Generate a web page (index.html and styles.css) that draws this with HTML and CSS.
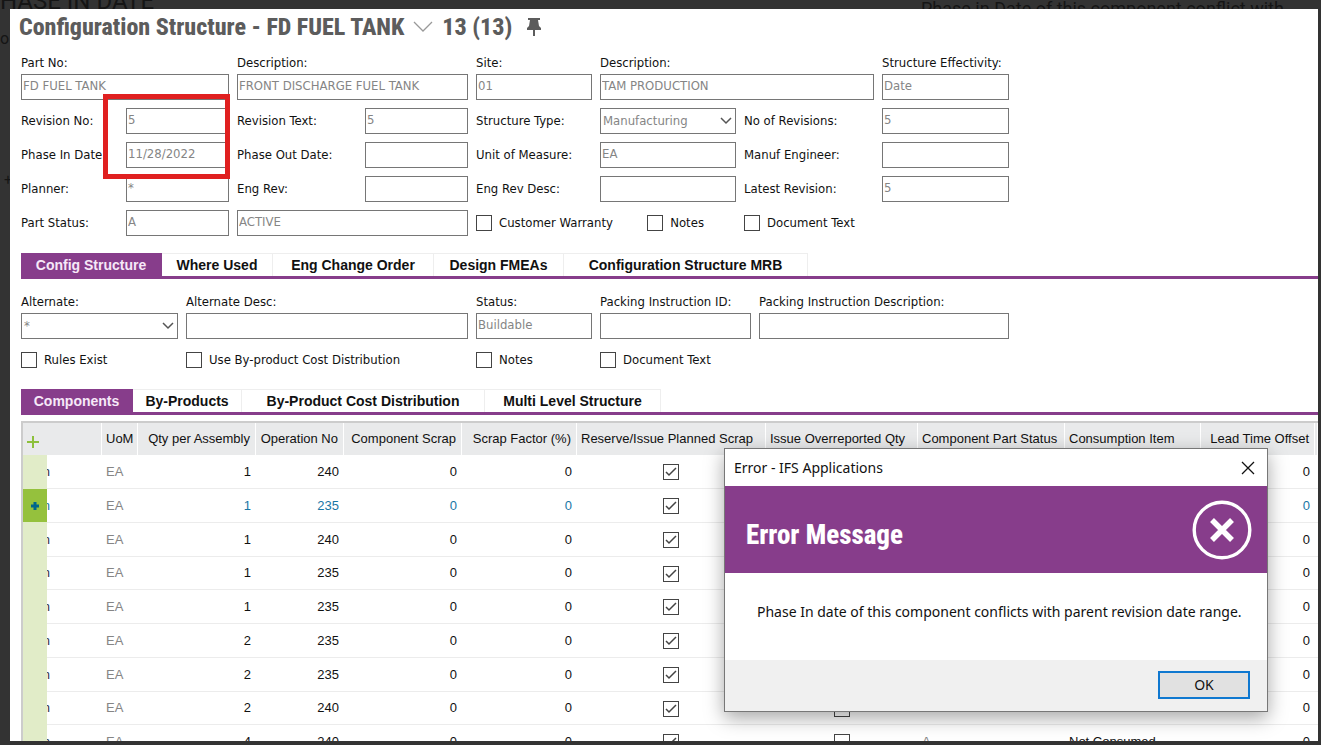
FILE: index.html
```html
<!DOCTYPE html>
<html lang="en">
<head>
<meta charset="utf-8">
<title>Configuration Structure</title>
<link rel="stylesheet" href="styles.css">
</head>
<body>
<div class="backdrop" aria-hidden="true">
  <p class="back-title">HASE IN DATE</p>
  <p class="back-note">Phase in Date of this component conflict with</p>
  <p class="back-letter">o</p>
  <p class="back-plus">+</p>
</div>
<main class="window">
  <header class="title">
    <h1>Configuration Structure - FD FUEL TANK</h1>
    <svg class="title-chevron" viewBox="0 0 20 12" width="20" height="12"><path d="M1 1l9 9 9-9" fill="none" stroke="#999" stroke-width="1.3"/></svg>
    <h1>13 (13)</h1>
    <svg class="pin" viewBox="0 0 14 18" width="14" height="18"><path d="M1 0h12v2h-2l1 6 2 2v2H8v6H6v-6H0v-2l2-2 1-6H1z" fill="#5c5c5c"/></svg>
  </header>

  <form class="form form-main">
    <div class="field span2"><label for="part">Part No:</label><input id="part" value="FD FUEL TANK"></div>
    <div class="field span2"><label for="desc">Description:</label><input id="desc" value="FRONT DISCHARGE FUEL TANK"></div>
    <div class="field"><label for="site">Site:</label><input id="site" value="01"></div>
    <div class="field span2"><label for="sdesc">Description:</label><input id="sdesc" value="TAM PRODUCTION"></div>
    <div class="field"><label for="eff">Structure Effectivity:</label><input id="eff" value="Date"></div>

    <label for="rev">Revision No:</label><input id="rev" value="5">
    <label for="revtext">Revision Text:</label><input id="revtext" value="5">
    <label for="stype">Structure Type:</label>
    <div class="select"><select id="stype"><option>Manufacturing</option></select><svg viewBox="0 0 12 8" width="12" height="8"><path d="M1 1l5 5 5-5" fill="none" stroke="#555" stroke-width="1.5"/></svg></div>
    <label for="norev">No of Revisions:</label><input id="norev" value="5">

    <label for="pin">Phase In Date:</label><input id="pin" value="11/28/2022">
    <label for="pout">Phase Out Date:</label><input id="pout">
    <label for="uom">Unit of Measure:</label><input id="uom" value="EA">
    <label for="meng">Manuf Engineer:</label><input id="meng">

    <label for="planner">Planner:</label><input id="planner" value="*">
    <label for="erev">Eng Rev:</label><input id="erev">
    <label for="erevd">Eng Rev Desc:</label><input id="erevd">
    <label for="lrev">Latest Revision:</label><input id="lrev" value="5">

    <label for="pstat">Part Status:</label><input id="pstat" value="A">
    <input class="span2" aria-label="Part status text" value="ACTIVE">
    <div class="check-pair span2">
      <label class="check"><input type="checkbox">Customer Warranty</label>
      <label class="check"><input type="checkbox">Notes</label>
    </div>
    <label class="check span2"><input type="checkbox">Document Text</label>
    <div class="highlight"></div>
  </form>

  <nav class="tabs tabs-main">
    <button class="active">Config Structure</button><button>Where Used</button><button>Eng Change Order</button><button>Design FMEAs</button><button>Configuration Structure MRB</button>
  </nav>

  <form class="form form-alt">
    <div class="field"><label for="alt">Alternate:</label>
      <div class="select"><select id="alt"><option>*</option></select><svg viewBox="0 0 12 8" width="12" height="8"><path d="M1 1l5 5 5-5" fill="none" stroke="#555" stroke-width="1.5"/></svg></div></div>
    <div class="field"><label for="altd">Alternate Desc:</label><input id="altd"></div>
    <div class="field"><label for="status">Status:</label><input id="status" value="Buildable"></div>
    <div class="field"><label for="pid">Packing Instruction ID:</label><input id="pid"></div>
    <div class="field"><label for="pdesc">Packing Instruction Description:</label><input id="pdesc"></div>
    <label class="check"><input type="checkbox">Rules Exist</label>
    <label class="check"><input type="checkbox">Use By-product Cost Distribution</label>
    <label class="check"><input type="checkbox">Notes</label>
    <label class="check"><input type="checkbox">Document Text</label>
  </form>

  <nav class="tabs tabs-sub">
    <button class="active">Components</button><button>By-Products</button><button>By-Product Cost Distribution</button><button>Multi Level Structure</button>
  </nav>

  <table class="grid">
    <colgroup><col class="c-sel"><col class="c-cut"><col class="c-uom"><col class="c-qty"><col class="c-op"><col class="c-scrap"><col class="c-factor"><col class="c-reserve"><col class="c-issue"><col class="c-status"><col class="c-item"><col class="c-lead"><col></colgroup>
    <thead><tr>
      <th colspan="2" class="add"><svg viewBox="0 0 12 12" width="12" height="12"><path d="M6 0v12M0 6h12" stroke="#8dc03c" stroke-width="2"/></svg></th>
      <th>UoM</th><th class="num">Qty per Assembly</th><th class="num">Operation No</th><th class="num">Component Scrap</th><th class="num">Scrap Factor (%)</th><th>Reserve/Issue Planned Scrap</th><th>Issue Overreported Qty</th><th>Component Part Status</th><th>Consumption Item</th><th class="num">Lead Time Offset</th><th></th>
    </tr></thead>
    <tbody>
      <tr><td class="sel"></td><td class="cut"><span>n</span></td><td class="dim">EA</td><td class="num">1</td><td class="num">240</td><td class="num">0</td><td class="num">0</td><td class="mid"><input type="checkbox" aria-label="Planned scrap" checked></td><td class="mid"><input type="checkbox" aria-label="Overreported"></td><td class="dim">A</td><td>Not Consumed</td><td class="num">0</td><td></td></tr>
      <tr class="current"><td class="sel"><svg viewBox="0 0 8 8" width="8" height="8"><path d="M4 0v8M0 4h8" stroke="#00668c" stroke-width="3"/></svg></td><td class="cut"><span>n</span></td><td class="dim">EA</td><td class="num">1</td><td class="num">235</td><td class="num">0</td><td class="num">0</td><td class="mid"><input type="checkbox" aria-label="Planned scrap" checked></td><td class="mid"><input type="checkbox" aria-label="Overreported"></td><td class="dim">A</td><td>Not Consumed</td><td class="num">0</td><td></td></tr>
      <tr><td class="sel"></td><td class="cut"><span>n</span></td><td class="dim">EA</td><td class="num">1</td><td class="num">240</td><td class="num">0</td><td class="num">0</td><td class="mid"><input type="checkbox" aria-label="Planned scrap" checked></td><td class="mid"><input type="checkbox" aria-label="Overreported"></td><td class="dim">A</td><td>Not Consumed</td><td class="num">0</td><td></td></tr>
      <tr><td class="sel"></td><td class="cut"><span>n</span></td><td class="dim">EA</td><td class="num">1</td><td class="num">235</td><td class="num">0</td><td class="num">0</td><td class="mid"><input type="checkbox" aria-label="Planned scrap" checked></td><td class="mid"><input type="checkbox" aria-label="Overreported"></td><td class="dim">A</td><td>Not Consumed</td><td class="num">0</td><td></td></tr>
      <tr><td class="sel"></td><td class="cut"><span>n</span></td><td class="dim">EA</td><td class="num">1</td><td class="num">235</td><td class="num">0</td><td class="num">0</td><td class="mid"><input type="checkbox" aria-label="Planned scrap" checked></td><td class="mid"><input type="checkbox" aria-label="Overreported"></td><td class="dim">A</td><td>Not Consumed</td><td class="num">0</td><td></td></tr>
      <tr><td class="sel"></td><td class="cut"><span>n</span></td><td class="dim">EA</td><td class="num">2</td><td class="num">235</td><td class="num">0</td><td class="num">0</td><td class="mid"><input type="checkbox" aria-label="Planned scrap" checked></td><td class="mid"><input type="checkbox" aria-label="Overreported"></td><td class="dim">A</td><td>Not Consumed</td><td class="num">0</td><td></td></tr>
      <tr><td class="sel"></td><td class="cut"><span>n</span></td><td class="dim">EA</td><td class="num">2</td><td class="num">235</td><td class="num">0</td><td class="num">0</td><td class="mid"><input type="checkbox" aria-label="Planned scrap" checked></td><td class="mid"><input type="checkbox" aria-label="Overreported"></td><td class="dim">A</td><td>Not Consumed</td><td class="num">0</td><td></td></tr>
      <tr><td class="sel"></td><td class="cut"><span>n</span></td><td class="dim">EA</td><td class="num">2</td><td class="num">240</td><td class="num">0</td><td class="num">0</td><td class="mid"><input type="checkbox" aria-label="Planned scrap" checked></td><td class="mid"><input type="checkbox" aria-label="Overreported"></td><td class="dim">A</td><td>Not Consumed</td><td class="num">0</td><td></td></tr>
      <tr><td class="sel"></td><td class="cut"><span>n</span></td><td class="dim">EA</td><td class="num">4</td><td class="num">240</td><td class="num">0</td><td class="num">0</td><td class="mid"><input type="checkbox" aria-label="Planned scrap" checked></td><td class="mid"><input type="checkbox" aria-label="Overreported"></td><td class="dim">A</td><td>Not Consumed</td><td class="num">0</td><td></td></tr>
    </tbody>
  </table>
</main>

<section class="dialog" role="dialog" aria-labelledby="dialog-title">
  <div class="dialog-bar"><span id="dialog-title">Error - IFS Applications</span>
    <button class="close" aria-label="Close"><svg viewBox="0 0 14 14" width="14" height="14"><path d="M1 1l12 12M13 1L1 13" stroke="#111" stroke-width="1.3"/></svg></button></div>
  <div class="dialog-banner"><h2>Error Message</h2>
    <svg viewBox="0 0 60 60" width="60" height="60"><circle cx="30" cy="30" r="27.8" fill="none" stroke="#fff" stroke-width="3.4"/><path d="M20 20l20 20M40 20L20 40" stroke="#fff" stroke-width="5.5"/></svg></div>
  <p class="dialog-text">Phase In date of this component conflicts with parent revision date range.</p>
  <div class="dialog-foot"><button class="ok">OK</button></div>
</section>
</body>
</html>
```
FILE: styles.css
```css
* { box-sizing: border-box; }

body {
  margin: 0;
  height: 100vh;
  padding: 9px 3px 4px 10px;
  overflow: hidden;
  background: #333;
  position: relative;
  font: 13px/20px "DejaVu Sans Condensed", "Noto Sans", sans-serif;
  color: #111;
}

h1, h2, p { margin: 0; }
button, input, select { font: inherit; color: inherit; }

/* Dimmed page behind the window */
.backdrop { position: absolute; inset: 0; color: #151515; font-family: Roboto, sans-serif; white-space: nowrap; }
.backdrop p { position: absolute; }
.back-title { left: 0; top: -13px; font-size: 24px; line-height: 28px; }
.back-note { left: 921px; top: -1px; font-size: 18px; }
.back-letter { left: 0; top: 29px; font-size: 16px; }
.back-plus { left: 4px; top: 170px; font-size: 14px; }

.window {
  position: relative;
  height: 100%;
  overflow: hidden;
  background: #fff;
  padding-left: 11px;
}

.title { display: flex; align-items: center; height: 36px; margin-left: -2px; gap: 9px; }
.title h1 { font: 800 24px/36px "Roboto Condensed", "Liberation Sans Narrow", sans-serif; color: #5c5c5c; white-space: nowrap; }
.title .pin { margin-left: 6px; }

/* Forms */
.form { display: grid; column-gap: 8px; row-gap: 8px; align-items: center; position: relative; }
.form-main { grid-template-columns: 97px 103px 120px 103px 116px 136px 130px 127px; margin-top: 8px; }
.form-alt { grid-template-columns: 157px 282px 116px 151px 250px; row-gap: 11px; margin-top: 13px; }
.form label { white-space: nowrap; }
.span2 { grid-column: span 2; }
.field { display: flex; flex-direction: column; min-width: 0; }
.field label { height: 21px; }
.form input:not([type="checkbox"]), .form select {
  width: 100%;
  height: 26px;
  border: 1px solid #767676;
  border-radius: 0;
  background: #fff;
  color: #858585;
  padding: 0 1px 3px;
  outline: 0;
}
.form select { appearance: none; padding: 0 2px; }
.select { position: relative; height: 26px; }
.select svg { position: absolute; right: 4px; top: 9px; pointer-events: none; }

.form input[type="checkbox"], .grid input[type="checkbox"] {
  appearance: none;
  width: 16px;
  height: 16px;
  margin: 0;
  border: 1px solid #444;
  background-color: #fff;
  vertical-align: middle;
}
input[type="checkbox"]:checked {
  background-image: url("data:image/svg+xml,%3Csvg xmlns='http://www.w3.org/2000/svg' viewBox='0 0 14 14'%3E%3Cpath d='M2 7l3 3 7-7' fill='none' stroke='%23444' stroke-width='1.5'/%3E%3C/svg%3E");
}
.check { display: flex; align-items: center; gap: 7px; }
.check-pair { display: flex; justify-content: space-between; padding-right: 32px; }

.highlight { position: absolute; left: 82px; top: 41px; width: 127px; height: 85px; border: 5px solid #e02020; }

/* Tabs */
.tabs { display: grid; height: 26px; border-bottom: 3px solid #873d8b; }
.tabs button {
  height: 23px;
  padding: 0;
  border: solid #eee;
  border-width: 1px 1px 0 0;
  background: #fff;
  font: bold 14px/20px "Liberation Sans", sans-serif;
  color: #111;
  white-space: nowrap;
}
.tabs .active { background: #873d8b; border-color: #873d8b; color: #f6e8f8; }
.tabs-main { margin-top: 17px; grid-template-columns: 141px 111px 161px 130px 244px; }
.tabs-sub { margin-top: 19px; grid-template-columns: 112px 109px 243px 176px; }

/* Component list */
.grid {
  width: 100%;
  margin-top: 6px;
  border-collapse: separate;
  border-spacing: 0;
  table-layout: fixed;
  border: solid #ccc;
  border-width: 2px 0 0 2px;
  font: 13px/20px "Liberation Sans", sans-serif;
}
.c-sel { width: 24px; } .c-cut { width: 55px; } .c-uom { width: 36px; } .c-qty { width: 118px; }
.c-op { width: 88px; } .c-scrap { width: 118px; } .c-factor { width: 115px; } .c-reserve { width: 189px; }
.c-issue { width: 152px; } .c-status { width: 147px; } .c-item { width: 136px; } .c-lead { width: 114px; }
.grid th {
  height: 32px;
  padding: 0 5px 0 4px;
  background: #e9eaeb;
  border-right: 1px solid #fff;
  font-weight: normal;
  text-align: left;
  white-space: nowrap;
}
.grid td { height: 34px; padding: 0 5px 0 4px; border-bottom: 1px solid #ececec; white-space: nowrap; }
.grid tr:nth-child(4n) td { height: 33px; }
.grid .num { text-align: right; }
.grid .mid { text-align: center; }
.grid .dim { color: #858585; }
.grid .add svg { display: block; margin: 5px 0 0; }
.grid .sel { background: #e1ecc8; border-bottom-color: #e1ecc8; padding: 0; text-align: center; }
.grid .cut { padding: 0; }
.cut span { display: flex; justify-content: flex-end; width: 3px; overflow: hidden; color: #334; }
.current .num, .current .cut span { color: #1976a5; }
.grid .current .sel { background: #95c13d; }

/* Error dialog */
.dialog {
  position: absolute;
  left: 724px;
  top: 448px;
  width: 544px;
  background: #fff;
  border: 1px solid #777;
  box-shadow: 0 6px 18px rgba(0, 0, 0, .35);
  font: 14px/20px "Noto Sans", sans-serif;
}
.dialog-bar { display: flex; align-items: center; justify-content: space-between; height: 37px; padding: 0 12px 0 9px; }
.close { display: flex; padding: 0; border: 0; background: none; }
.dialog-banner { display: flex; align-items: center; justify-content: space-between; height: 87px; padding: 0 15px 0 21px; background: #873d8b; color: #fff; }
.dialog-banner h2 { padding-top: 10px; font: 800 27px/32px "Roboto Condensed", "Liberation Sans Narrow", sans-serif; }
.dialog-text { padding: 29px 20px 38px 32px; white-space: nowrap; }
.dialog-foot { display: flex; justify-content: flex-end; padding: 11px 17px 12px; background: #f0f0f0; }
.ok { width: 92px; height: 28px; padding: 0; border: 2px solid #0f78d0; background: #e1e1e1; }
```
